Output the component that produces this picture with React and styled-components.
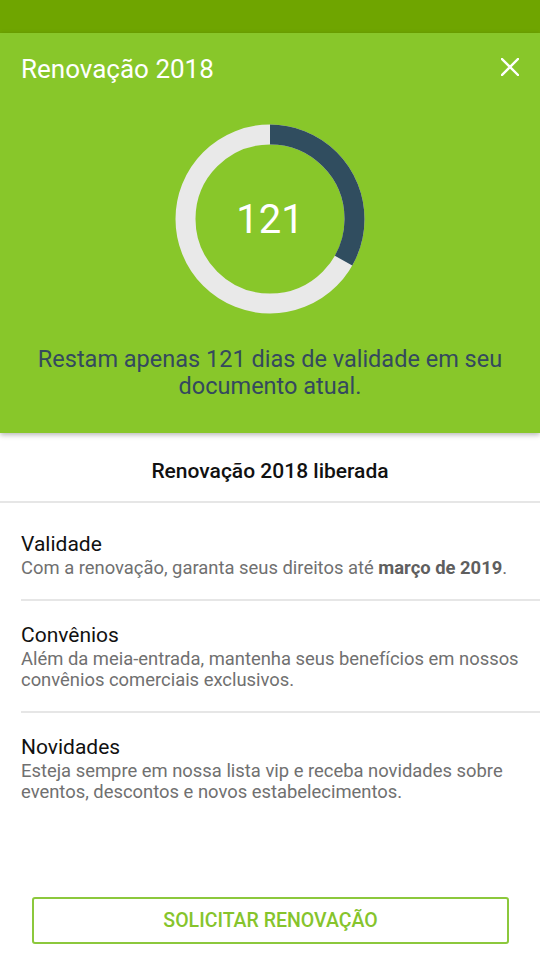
import React from "react";
import styled, { createGlobalStyle } from "styled-components";

const GlobalStyle = createGlobalStyle`
  html, body { margin: 0; padding: 0; background: #ffffff; }
  body { font-family: Roboto, "Noto Sans", "Liberation Sans", sans-serif; }
  * { box-sizing: border-box; }
`;

const Page = styled.div`
  width: 540px;
  height: 960px;
  display: flex;
  flex-direction: column;
  background: #ffffff;
  overflow: hidden;
`;

const StatusBar = styled.div`
  height: 33px;
  flex: none;
  background: #6fa500;
`;

const Header = styled.header`
  position: relative;
  z-index: 1;
  height: 400px;
  flex: none;
  background: #88c72a;
  box-shadow: 0 2px 5px rgba(0, 0, 0, 0.28);
  display: flex;
  flex-direction: column;
  align-items: center;
`;

const TopRow = styled.div`
  width: 100%;
  height: 71px;
  padding: 0 22px 0 21px;
  display: flex;
  align-items: center;
  justify-content: space-between;
`;

const Title = styled.h1`
  margin: 0;
  font-size: 26px;
  font-weight: 400;
  color: #ffffff;
`;

const CloseButton = styled.button`
  width: 24px;
  height: 24px;
  padding: 0;
  margin: 0 -4px 4px 0;
  border: none;
  background: transparent;
  display: flex;
  align-items: center;
  justify-content: center;
`;

const RingWrap = styled.div`
  position: relative;
  width: 190px;
  height: 190px;
  margin-top: 20px;
`;

const RingValue = styled.div`
  position: absolute;
  inset: 0;
  display: flex;
  align-items: center;
  justify-content: center;
  font-size: 40px;
  font-weight: 400;
  color: #ffffff;
`;

const Message = styled.p`
  margin: 32px 0 0;
  padding: 0 30px;
  text-align: center;
  font-size: 23.5px;
  line-height: 27px;
  color: #34495e;
`;

const SubHeader = styled.div`
  height: 70px;
  flex: none;
  padding-top: 26px;
  text-align: center;
  font-size: 21px;
  line-height: 24px;
  font-weight: 500;
  color: #111111;
  border-bottom: 2px solid #e6e6e6;
`;

const List = styled.div`
  display: flex;
  flex-direction: column;
  padding: 7px 0 0 21px;
`;

const Item = styled.div`
  padding: 21px 0 ${(p) => (p.$last ? "0" : "21px")};
  border-bottom: ${(p) => (p.$last ? "none" : "2px solid #e6e6e6")};
`;

const ItemTitle = styled.div`
  font-size: 21px;
  line-height: 26px;
  color: #111111;
`;

const ItemText = styled.div`
  font-size: 18.4px;
  line-height: 21px;
  color: #707070;
  padding-right: 6px;

  b {
    font-weight: 700;
    color: #5f5f5f;
  }
`;

const Spacer = styled.div`
  flex: 1;
`;

const Footer = styled.div`
  padding: 0 31px 16px 32px;
`;

const PrimaryButton = styled.button`
  width: 100%;
  height: 47px;
  border: 2px solid #8cc83c;
  border-radius: 3px;
  background: #ffffff;
  color: #86c42c;
  font-family: Roboto, "Noto Sans", "Liberation Sans", sans-serif;
  font-size: 19.5px;
  font-weight: 500;
`;

function Ring({ value, total }) {
  const r = 84.5;
  const c = 2 * Math.PI * r;
  const frac = value / total;
  return (
    <svg width="190" height="190" viewBox="0 0 190 190">
      <circle cx="95" cy="95" r={r} fill="none" stroke="#e9e9e9" strokeWidth="20" />
      <circle
        cx="95"
        cy="95"
        r={r}
        fill="none"
        stroke="#304d5f"
        strokeWidth="20"
        strokeDasharray={`${c * frac} ${c}`}
        transform="rotate(-90 95 95)"
      />
    </svg>
  );
}

const items = [
  {
    title: "Validade",
    text: (
      <>
        Com a renovação, garanta seus direitos até <b>março de 2019</b>.
      </>
    ),
  },
  {
    title: "Convênios",
    text: "Além da meia-entrada, mantenha seus benefícios em nossos convênios comerciais exclusivos.",
  },
  {
    title: "Novidades",
    text: "Esteja sempre em nossa lista vip e receba novidades sobre eventos, descontos e novos estabelecimentos.",
  },
];

export default function App() {
  return (
    <>
      <GlobalStyle />
      <Page>
        <StatusBar />
        <Header>
          <TopRow>
            <Title>Renovação 2018</Title>
            <CloseButton aria-label="Fechar">
              <svg width="18" height="18" viewBox="0 0 18 18">
                <path d="M1 1 L17 17 M17 1 L1 17" stroke="#ffffff" strokeWidth="2.4" strokeLinecap="square" />
              </svg>
            </CloseButton>
          </TopRow>
          <RingWrap>
            <Ring value={121} total={365} />
            <RingValue>121</RingValue>
          </RingWrap>
          <Message>Restam apenas 121 dias de validade em seu documento atual.</Message>
        </Header>
        <SubHeader>Renovação 2018 liberada</SubHeader>
        <List>
          {items.map((it, i) => (
            <Item key={it.title} $last={i === items.length - 1}>
              <ItemTitle>{it.title}</ItemTitle>
              <ItemText>{it.text}</ItemText>
            </Item>
          ))}
        </List>
        <Spacer />
        <Footer>
          <PrimaryButton>SOLICITAR RENOVAÇÃO</PrimaryButton>
        </Footer>
      </Page>
    </>
  );
}
